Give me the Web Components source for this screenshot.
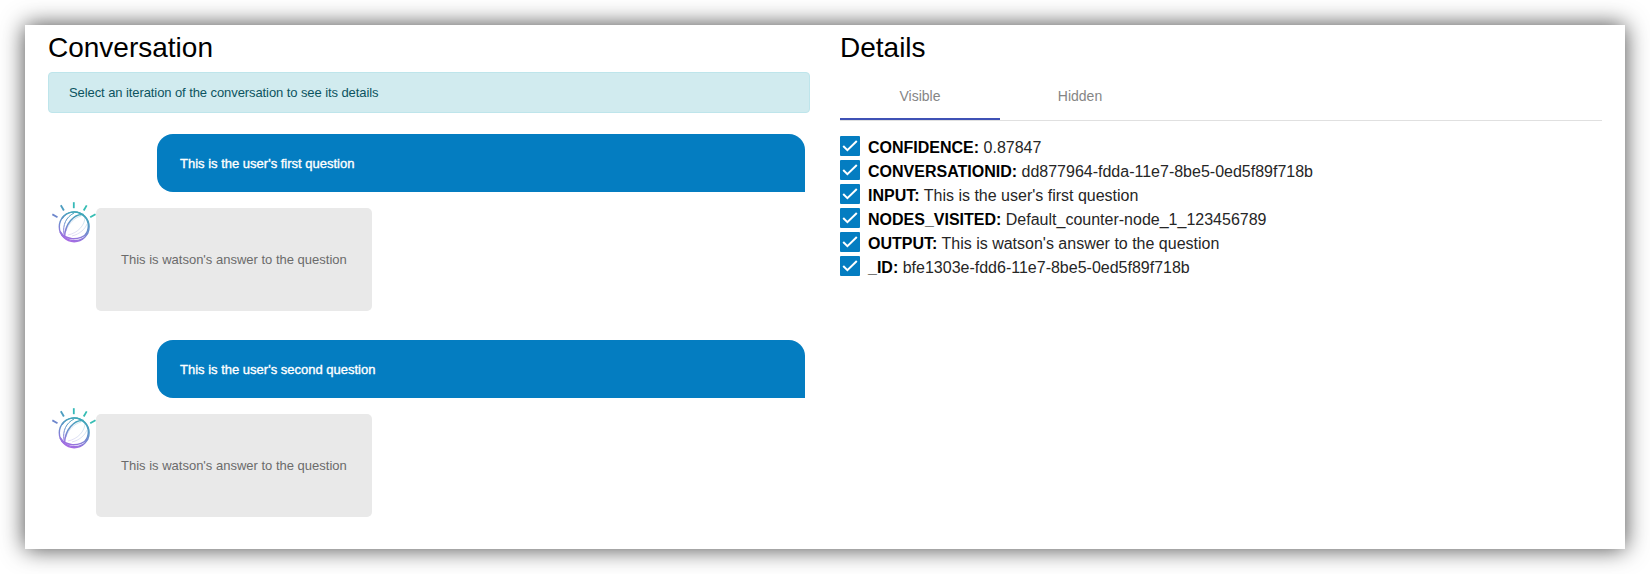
<!DOCTYPE html>
<html lang="en">
<head>
<meta charset="utf-8">
<title>Conversation</title>
<style>
html, body { margin: 0; background: #fff; }
body { box-sizing: border-box; height: 574px; padding: 25px; overflow: hidden; font-family: "Liberation Sans", Arial, sans-serif; color: #000; }
</style>
</head>
<body>
<conversation-page>
  <page-column slot="left" heading="Conversation">
    <info-alert>Select an iteration of the conversation to see its details</info-alert>
    <user-message>This is the user's first question</user-message>
    <watson-message>This is watson's answer to the question</watson-message>
    <user-message>This is the user's second question</user-message>
    <watson-message>This is watson's answer to the question</watson-message>
  </page-column>
  <page-column slot="right" heading="Details">
    <tab-bar><span>Visible</span><span>Hidden</span></tab-bar>
    <detail-row name="CONFIDENCE">0.87847</detail-row>
    <detail-row name="CONVERSATIONID">dd877964-fdda-11e7-8be5-0ed5f89f718b</detail-row>
    <detail-row name="INPUT">This is the user's first question</detail-row>
    <detail-row name="NODES_VISITED">Default_counter-node_1_123456789</detail-row>
    <detail-row name="OUTPUT">This is watson's answer to the question</detail-row>
    <detail-row name="_ID">bfe1303e-fdd6-11e7-8be5-0ed5f89f718b</detail-row>
  </page-column>
</conversation-page>
<script>
function define(name, html, setup) {
  customElements.define(name, class extends HTMLElement {
    constructor() {
      super();
      this.attachShadow({ mode: "open" }).innerHTML = html;
    }
    connectedCallback() { if (setup) setup(this); }
  });
}

define("conversation-page", `
<style>
:host { display: grid; grid-template-columns: 762px 762px; column-gap: 30px; box-sizing: border-box; height: 524px; padding: 7px 23px 0; background: #fff; box-shadow: 0 0 22px rgba(0,0,0,.72); }
</style>
<slot name="left"></slot><slot name="right"></slot>`);

define("page-column", `
<style>
:host { display: flex; flex-direction: column; }
h2 { margin: 0 0 8px; font-size: 28px; line-height: 32px; font-weight: 400; }
</style>
<h2></h2><slot></slot>`, el => {
  el.shadowRoot.querySelector("h2").textContent = el.getAttribute("heading");
});

define("info-alert", `
<style>
:host { display: block; box-sizing: border-box; height: 41px; margin-bottom: 21px; padding: 0 20px; border: 1px solid #bee5eb; border-radius: 4px; background: #d1ebef; color: #0c5460; font-size: 13px; line-height: 39px; letter-spacing: -.085px; }
</style>
<slot></slot>`);

define("user-message", `
<style>
:host { display: block; box-sizing: border-box; height: 58px; margin: 0 5px 8px 109px; padding-left: 23px; border-radius: 16px 16px 0 16px; background: #047dc1; color: #fff; font-size: 13px; line-height: 59px; -webkit-text-stroke: .35px #fff; }
</style>
<slot></slot>`);

define("watson-message", `
<style>
:host { display: flex; align-items: flex-start; padding-left: 4px; margin-bottom: 29px; }
svg { display: block; width: 44px; height: 46px; flex: none; }
div { box-sizing: border-box; width: 276px; height: 103px; margin-top: 8px; padding-left: 25px; border-radius: 5px; background: #e9e9e9; color: #6b6b6b; font-size: 13px; line-height: 103px; white-space: nowrap; }
</style>
<svg viewBox="0 0 44 46" fill="none">
  <defs>
    <linearGradient id="g" x1="27" y1="11" x2="16" y2="42" gradientUnits="userSpaceOnUse">
      <stop offset="0" stop-color="#38aab5"/><stop offset=".5" stop-color="#6a8fcc"/><stop offset="1" stop-color="#ac68e6"/>
    </linearGradient>
  </defs>
  <g stroke-width="1.8">
    <path d="M21.8 2.2v6" stroke="#35b9b8"/>
    <path d="M8.8 5.2l3.1 5.3" stroke="#4c9dc0"/>
    <path d="M.3 14.4l5.2 2.9" stroke="#6d86cc"/>
    <path d="M34.7 5.4l-3 5.1" stroke="#35bdb3"/>
    <path d="M43.5 14.2l-5.3 3" stroke="#35bdb3"/>
  </g>
  <g stroke="url(#g)">
    <circle cx="22.2" cy="26.8" r="14.9" stroke-width="1.4"/>
    <path d="M10 18.5C15 11 26 9.500 33 17c4.500 5 4.500 13 0 18" stroke-width="1.5"/>
    <path d="M31.500 14.500C22 13.500 13 24 12.500 37.500" stroke-width="1.500"/>
    <path d="M8 31.500C13 40 26 41.500 36 33" stroke-width="1.500"/>
    <path d="M9.500 35C16 41.500 25 42 31 38.500" stroke-width="1.300"/>
    <path d="M12 34C10.500 25 14 17 22 13" stroke-width="1"/>
    <path d="M16 35C26 33 33 25 33 17M20 36C28 34 33 29 35 24M14 31C17 23 22 18 29 16" stroke-width="1" opacity=".25"/>
  </g>
</svg>
<div><slot></slot></div>`);

define("tab-bar", `
<style>
:host { display: flex; box-sizing: border-box; height: 49px; margin-bottom: 15px; border-bottom: 1px solid #e0e0e0; color: #858585; font-size: 14px; }
::slotted(span) { box-sizing: border-box; width: 160px; height: 48px; line-height: 48px; text-align: center; }
::slotted(span:first-child) { border-bottom: 2px solid #3f51b5; }
</style>
<slot></slot>`);

define("detail-row", `
<style>
:host { display: flex; align-items: center; height: 20px; margin-bottom: 4px; font-size: 16px; line-height: 20px; color: #262626; white-space: pre; }
svg { display: block; width: 20px; height: 20px; margin-right: 8px; border-radius: 1px; background: #047dc1; }
p { margin: 0; padding-top: 3px; }
b { color: #000; }
</style>
<svg viewBox="0 0 20 20" fill="none"><path d="M3.2 10l4.2 4.200L16.800 5" stroke="#fff" stroke-width="2"/></svg>
<p><b></b> <slot></slot></p>`, el => {
  el.shadowRoot.querySelector("b").textContent = el.getAttribute("name") + ":";
});
</script>
</body>
</html>
